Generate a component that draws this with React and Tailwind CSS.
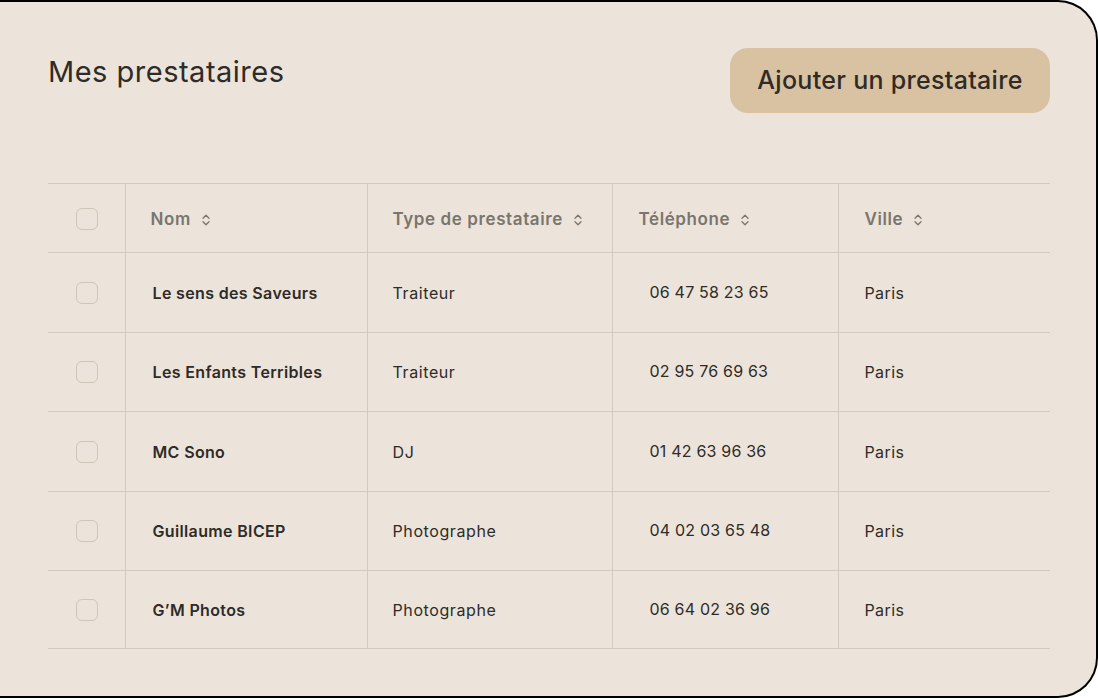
import { useState } from "react";

const rows = [
  { name: "Le sens des Saveurs", type: "Traiteur", phone: "06 47 58 23 65", city: "Paris", h: "h-[80px]" },
  { name: "Les Enfants Terribles", type: "Traiteur", phone: "02 95 76 69 63", city: "Paris", h: "h-[79px]" },
  { name: "MC Sono", type: "DJ", phone: "01 42 63 96 36", city: "Paris", h: "h-[80px]" },
  { name: "Guillaume BICEP", type: "Photographe", phone: "04 02 03 65 48", city: "Paris", h: "h-[79px]" },
  { name: "G\u2019M Photos", type: "Photographe", phone: "06 64 02 36 96", city: "Paris", h: "h-[78px]" },
];

function SortIcon() {
  return (
    <svg width="10" height="14" viewBox="0 0 10 14" fill="none" className="ml-[10px] shrink-0">
      <path d="M2 5.2 L5 2.2 L8 5.2" stroke="#7a756e" strokeWidth="1.3" strokeLinecap="round" strokeLinejoin="round" />
      <path d="M2 8.8 L5 11.8 L8 8.8" stroke="#7a756e" strokeWidth="1.3" strokeLinecap="round" strokeLinejoin="round" />
    </svg>
  );
}

function Checkbox({ checked, onChange }) {
  return (
    <button
      onClick={onChange}
      className={`w-[22px] h-[22px] rounded-[6px] border border-[#d0c5b8] ${checked ? "bg-[#d9c2a1]" : "bg-transparent"}`}
    />
  );
}

export default function App() {
  const [selected, setSelected] = useState([]);

  const toggle = (i) =>
    setSelected((s) => (s.includes(i) ? s.filter((x) => x !== i) : [...s, i]));

  return (
    <div className="w-[1098px] h-[698px] bg-[#ece4da] border-y-2 border-r-2 border-black rounded-r-[40px] pl-12 pr-[46px] pt-[46px] font-['Inter','Liberation_Sans',sans-serif] text-[#2e2b28]">
      {/* Header */}
      <div className="flex items-start justify-between">
        <h1 className="text-[29px] leading-[39px] mt-[4px] font-normal tracking-[0.5px]">Mes prestataires</h1>
        <button className="w-[320px] h-[65px] rounded-[18px] bg-[#d9c2a1] text-[25px] font-medium tracking-[0.3px]">
          Ajouter un prestataire
        </button>
      </div>

      {/* Table */}
      <table className="w-full mt-[70px] border-collapse">
        <thead>
          <tr className="h-[69px] border-y border-[#d3cabf] text-left text-[17px] tracking-[0.6px] text-[#7a756e]">
            <th className="w-[77px] pl-[28px] pt-[1px] border-r border-[#d3cabf]">
              <div className="flex">
                <Checkbox
                  checked={selected.length === rows.length}
                  onChange={() => setSelected(selected.length === rows.length ? [] : rows.map((_, i) => i))}
                />
              </div>
            </th>
            <th className="w-[242px] pl-[25px] pt-[3px] border-r border-[#d3cabf] font-semibold">
              <div className="flex items-center">Nom<SortIcon /></div>
            </th>
            <th className="w-[245px] pl-[25px] pt-[3px] border-r border-[#d3cabf] font-semibold">
              <div className="flex items-center">Type de prestataire<SortIcon /></div>
            </th>
            <th className="w-[226px] pl-[26px] pt-[3px] border-r border-[#d3cabf] font-semibold">
              <div className="flex items-center">Téléphone<SortIcon /></div>
            </th>
            <th className="pl-[26px] pt-[3px] font-semibold">
              <div className="flex items-center">Ville<SortIcon /></div>
            </th>
          </tr>
        </thead>
        <tbody>
          {rows.map((row, i) => (
            <tr key={i} className={`${row.h} border-b border-[#d3cabf] text-[16px]`}>
              <td className="pl-[28px] border-r border-[#d3cabf]">
                <div className="flex">
                  <Checkbox checked={selected.includes(i)} onChange={() => toggle(i)} />
                </div>
              </td>
              <td className="pl-[27px] border-r border-[#d3cabf] font-semibold tracking-[0.35px]">{row.name}</td>
              <td className="pl-[25px] border-r border-[#d3cabf] tracking-[0.6px]">{row.type}</td>
              <td className="pl-[37px] pb-[2px] border-r border-[#d3cabf] tracking-[0.2px]">{row.phone}</td>
              <td className="pl-[26px] tracking-[0.4px]">{row.city}</td>
            </tr>
          ))}
        </tbody>
      </table>
    </div>
  );
}
